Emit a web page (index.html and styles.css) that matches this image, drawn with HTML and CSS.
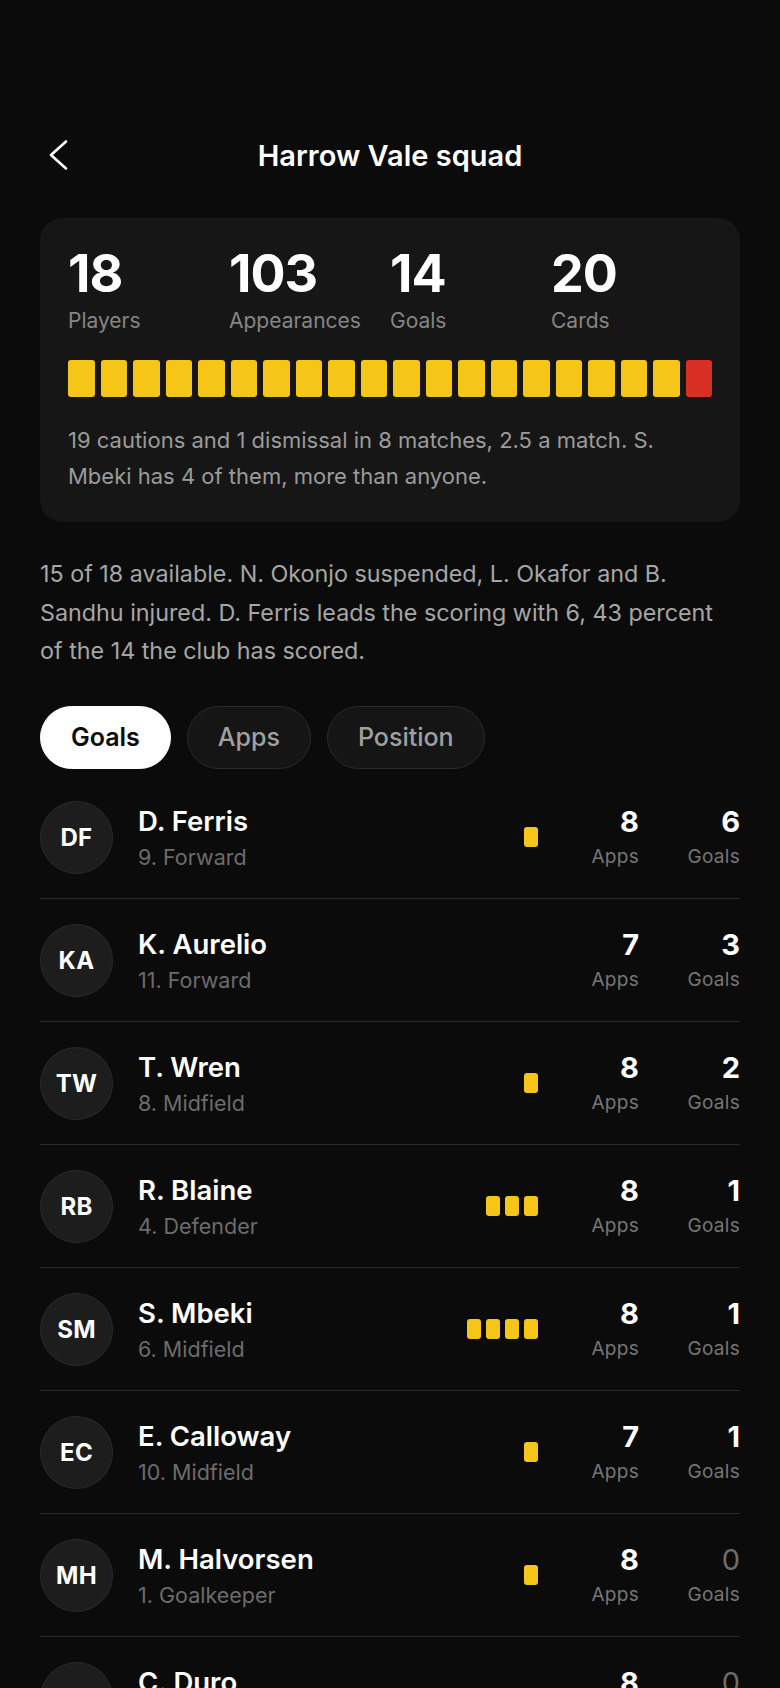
FILE: index.html
```html
<!DOCTYPE html>
<html lang="en">
<head>
<meta charset="utf-8">
<title>Harrow Vale squad</title>
<link rel="stylesheet" href="styles.css">
</head>
<body>
<div class="page">
  <header class="header">
    <button class="back" aria-label="Back">
      <svg width="28" height="32" viewBox="0 0 28 32" fill="none"><path d="M26 2.5 L11 16 L26 29.5" stroke="#fff" stroke-width="2.6" stroke-linecap="round" stroke-linejoin="round"/></svg>
    </button>
    <h1 class="title">Harrow Vale squad</h1>
    <span></span>
  </header>

  <section class="summary">
    <div class="stats">
      <div class="stat"><div class="stat-num">18</div><div class="stat-label">Players</div></div>
      <div class="stat"><div class="stat-num">103</div><div class="stat-label">Appearances</div></div>
      <div class="stat"><div class="stat-num">14</div><div class="stat-label">Goals</div></div>
      <div class="stat"><div class="stat-num">20</div><div class="stat-label">Cards</div></div>
    </div>
    <div class="card-strip">
      <span class="c y"></span><span class="c y"></span><span class="c y"></span><span class="c y"></span><span class="c y"></span>
      <span class="c y"></span><span class="c y"></span><span class="c y"></span><span class="c y"></span><span class="c y"></span>
      <span class="c y"></span><span class="c y"></span><span class="c y"></span><span class="c y"></span><span class="c y"></span>
      <span class="c y"></span><span class="c y"></span><span class="c y"></span><span class="c y"></span><span class="c r"></span>
    </div>
    <p class="summary-text">19 cautions and 1 dismissal in 8 matches, 2.5 a match. S. Mbeki has 4 of them, more than anyone.</p>
  </section>

  <p class="lead">15 of 18 available. N. Okonjo suspended, L. Okafor and B. Sandhu injured. D. Ferris leads the scoring with 6, 43 percent of the 14 the club has scored.</p>

  <nav class="tabs">
    <button class="tab active">Goals</button>
    <button class="tab">Apps</button>
    <button class="tab">Position</button>
  </nav>

  <ul class="list">
    <li class="row">
      <div class="avatar">DF</div>
      <div class="info"><div class="name">D. Ferris</div><div class="pos">9. Forward</div></div>
      <div class="mini"><span></span></div>
      <div class="val"><div class="v">8</div><div class="vl">Apps</div></div>
      <div class="val"><div class="v">6</div><div class="vl">Goals</div></div>
    </li>
    <li class="row">
      <div class="avatar">KA</div>
      <div class="info"><div class="name">K. Aurelio</div><div class="pos">11. Forward</div></div>
      <div class="mini"></div>
      <div class="val"><div class="v">7</div><div class="vl">Apps</div></div>
      <div class="val"><div class="v">3</div><div class="vl">Goals</div></div>
    </li>
    <li class="row">
      <div class="avatar">TW</div>
      <div class="info"><div class="name">T. Wren</div><div class="pos">8. Midfield</div></div>
      <div class="mini"><span></span></div>
      <div class="val"><div class="v">8</div><div class="vl">Apps</div></div>
      <div class="val"><div class="v">2</div><div class="vl">Goals</div></div>
    </li>
    <li class="row">
      <div class="avatar">RB</div>
      <div class="info"><div class="name">R. Blaine</div><div class="pos">4. Defender</div></div>
      <div class="mini"><span></span><span></span><span></span></div>
      <div class="val"><div class="v">8</div><div class="vl">Apps</div></div>
      <div class="val"><div class="v">1</div><div class="vl">Goals</div></div>
    </li>
    <li class="row">
      <div class="avatar">SM</div>
      <div class="info"><div class="name">S. Mbeki</div><div class="pos">6. Midfield</div></div>
      <div class="mini"><span></span><span></span><span></span><span></span></div>
      <div class="val"><div class="v">8</div><div class="vl">Apps</div></div>
      <div class="val"><div class="v">1</div><div class="vl">Goals</div></div>
    </li>
    <li class="row">
      <div class="avatar">EC</div>
      <div class="info"><div class="name">E. Calloway</div><div class="pos">10. Midfield</div></div>
      <div class="mini"><span></span></div>
      <div class="val"><div class="v">7</div><div class="vl">Apps</div></div>
      <div class="val"><div class="v">1</div><div class="vl">Goals</div></div>
    </li>
    <li class="row">
      <div class="avatar">MH</div>
      <div class="info"><div class="name">M. Halvorsen</div><div class="pos">1. Goalkeeper</div></div>
      <div class="mini"><span></span></div>
      <div class="val"><div class="v">8</div><div class="vl">Apps</div></div>
      <div class="val"><div class="v zero">0</div><div class="vl">Goals</div></div>
    </li>
    <li class="row">
      <div class="avatar">CD</div>
      <div class="info"><div class="name">C. Duro</div><div class="pos">5. Defender</div></div>
      <div class="mini"><span></span><span></span></div>
      <div class="val"><div class="v">8</div><div class="vl">Apps</div></div>
      <div class="val"><div class="v zero">0</div><div class="vl">Goals</div></div>
    </li>
  </ul>
</div>
</body>
</html>
```

FILE: styles.css
```css
* { box-sizing: border-box; }

html, body {
  margin: 0;
  padding: 0;
  background: #0b0b0b;
  color: #ffffff;
  font-family: Inter, "Noto Sans", "Liberation Sans", sans-serif;
}

.page {
  padding: 120px 40px 0;
}

.header {
  display: grid;
  grid-template-columns: 28px 1fr 28px;
  align-items: center;
  height: 70px;
}

.back {
  background: none;
  border: 0;
  padding: 0;
  width: 28px;
  height: 32px;
  display: flex;
  cursor: pointer;
}

.title {
  margin: 0;
  text-align: center;
  font-size: 29px;
  font-weight: 600;
  letter-spacing: 0;
}

.summary {
  margin-top: 28px;
  background: #161616;
  border-radius: 22px;
  padding: 28px 28px 28px;
}

.stats {
  display: grid;
  grid-template-columns: repeat(4, 1fr);
}

.stat-num {
  font-size: 52px;
  font-weight: 700;
  line-height: 56px;
  letter-spacing: -1px;
}

.stat-label {
  font-size: 21px;
  line-height: 26px;
  color: #858585;
  margin-top: 6px;
}

.card-strip {
  display: flex;
  gap: 6px;
  margin-top: 26px;
}

.card-strip .c {
  flex: 1;
  height: 37px;
  border-radius: 3px;
}

.c.y { background: #f5c518; }
.c.r { background: #d93025; }

.summary-text {
  margin: 25px 0 0;
  font-size: 22px;
  line-height: 36px;
  color: #9b9b9b;
}

.lead {
  margin: 33px 0 0;
  font-size: 23.3px;
  line-height: 38.5px;
  color: #a6a6a6;
}

.tabs {
  display: flex;
  gap: 16px;
  margin-top: 35px;
}

.tab {
  height: 63px;
  padding: 0 30px;
  border-radius: 999px;
  border: 1.5px solid #2a2a2a;
  background: #151515;
  color: #a0a0a0;
  font-family: inherit;
  font-size: 25px;
  font-weight: 500;
}

.tab.active {
  background: #ffffff;
  border-color: #ffffff;
  color: #0b0b0b;
  font-weight: 600;
}

.list {
  list-style: none;
  margin: 7px 0 0;
  padding: 0;
}

.row {
  display: flex;
  align-items: center;
  padding: 25px 0 24px;
  border-bottom: 1px solid #2a2a2a;
}

.avatar {
  width: 73px;
  height: 73px;
  flex: none;
  border-radius: 50%;
  background: #1d1d1d;
  border: 1.5px solid #2a2a2a;
  display: flex;
  align-items: center;
  justify-content: center;
  font-size: 24px;
  font-weight: 700;
  letter-spacing: 0.3px;
}

.info {
  flex: 1;
  margin-left: 25px;
  display: flex;
  flex-direction: column;
  gap: 5px;
}

.name {
  font-size: 27.5px;
  font-weight: 600;
  line-height: 34px;
}

.pos {
  font-size: 21.5px;
  line-height: 28px;
  color: #6c6c6c;
}

.mini {
  display: flex;
  gap: 5px;
}

.mini span {
  width: 14px;
  height: 20px;
  border-radius: 3px;
  background: #f5c518;
}

.val {
  width: 63px;
  margin-left: 38px;
  text-align: right;
  display: flex;
  flex-direction: column;
  gap: 6px;
}

.v {
  font-size: 29px;
  font-weight: 700;
  line-height: 34px;
}

.v.zero {
  color: #6c6c6c;
  font-weight: 400;
}

.vl {
  font-size: 19px;
  line-height: 24px;
  color: #767676;
  letter-spacing: 0.3px;
}
```
